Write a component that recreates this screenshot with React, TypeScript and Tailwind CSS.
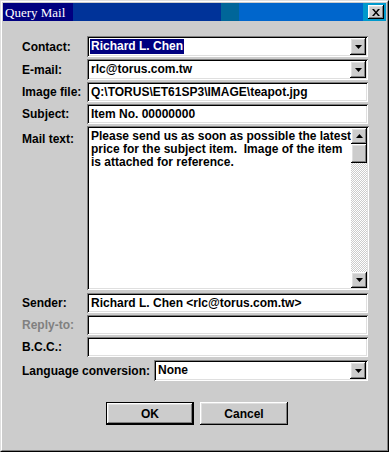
import React from 'react';

const sunken =
  'shadow-[inset_1px_1px_0_#808080,inset_-1px_-1px_0_#ffffff,inset_2px_2px_0_#000000,inset_-2px_-2px_0_#dfdfdf]';
const raised =
  'shadow-[inset_-1px_-1px_0_#000000,inset_1px_1px_0_#ffffff,inset_-2px_-2px_0_#808080,inset_2px_2px_0_#dfdfdf]';

const font = "font-['Liberation_Sans',Arial,sans-serif]";

function Arrow({ up = false }: { up?: boolean }) {
  return (
    <svg width="7" height="4" viewBox="0 0 7 4" className={up ? 'rotate-180' : ''}>
      <polygon points="0,0 7,0 3.5,4" fill="#000" />
    </svg>
  );
}

function DropButton() {
  return (
    <div className={`w-[16px] h-[17px] bg-[#cccccc] flex items-center justify-center ${raised}`}>
      <Arrow />
    </div>
  );
}

function Combo({ value, selected = false }: { value: string; selected?: boolean }) {
  return (
    <div className={`flex-1 h-[21px] bg-white flex items-center pl-[3px] pr-[2px] ${sunken}`}>
      <div className="flex-1 flex items-center">
        <span className={`px-[1px] leading-[15px] ${selected ? 'bg-[#000080] text-white' : 'text-black'}`}>{value}</span>
      </div>
      <DropButton />
    </div>
  );
}

function Field({ value = '' }: { value?: string }) {
  return (
    <div className={`flex-1 h-[20px] bg-white flex items-center pl-[4px] text-black ${sunken}`}>
      <span className="whitespace-pre">{value}</span>
    </div>
  );
}

function Row({ label, children, dim = false }: { label: string; children: React.ReactNode; dim?: boolean }) {
  return (
    <div className="flex items-center">
      <div className={`w-[65px] shrink-0 ${dim ? 'text-[#808080]' : 'text-black'}`}>{label}</div>
      {children}
    </div>
  );
}

export default function App() {
  return (
    <div className={`w-[389px] h-[452px] bg-[#cccccc] ${font} text-[12px] font-bold border border-t-[#dfdfdf] border-l-[#dfdfdf] border-r-black border-b-black`}>
      <div className="h-full border border-t-white border-l-white border-r-[#808080] border-b-[#808080] p-[1px] flex flex-col">
        {/* title bar */}
        <div className="h-[18px] flex items-center justify-between pl-[2px] pr-[2px] bg-[image:linear-gradient(to_right,#000080_0px_70px,#003399_70px_218px,#006699_218px_236px,#0066cc_236px_360px,#0099cc_360px_383px)]">
          <span className="font-['Liberation_Serif','Times_New_Roman',serif] font-normal text-[13px] text-white leading-none">Query Mail</span>
          <div className={`w-[16px] h-[14px] bg-[#cccccc] flex items-center justify-center ${raised}`}>
            <svg width="8" height="7" viewBox="0 0 8 7">
              <path d="M0 0h2l2 2.5L6 0h2L5 3.5 8 7H6L4 4.5 2 7H0l3-3.5z" fill="#000" />
            </svg>
          </div>
        </div>

        {/* body */}
        <div className="flex-1 flex flex-col pl-[19px] pr-[18px] pt-[15px]">
          <div className="flex flex-col gap-[2px]">
            <Row label="Contact:">
              <Combo value="Richard L. Chen" selected />
            </Row>
            <Row label="E-mail:">
              <Combo value="rlc@torus.com.tw" />
            </Row>
            <Row label="Image file:">
              <Field value="Q:\TORUS\ET61SP3\IMAGE\teapot.jpg" />
            </Row>
            <Row label="Subject:">
              <Field value="Item No. 00000000" />
            </Row>
            <div className="flex items-start">
              <div className="w-[65px] shrink-0 pt-[4px]">Mail text:</div>
              <div className={`flex-1 h-[164px] bg-white flex p-[2px] ${sunken}`}>
                <div className="flex-1 pl-[2px] pt-[2px] leading-[13px] text-black whitespace-pre">
                  <div>Please send us as soon as possible the latest</div>
                  <div>price for the subject item.  Image of the item</div>
                  <div>is attached for reference.</div>
                </div>
                <div className="w-[16px] flex flex-col">
                  <div className={`h-[16px] bg-[#cccccc] flex items-center justify-center ${raised}`}>
                    <Arrow up />
                  </div>
                  <div className={`h-[19px] bg-[#cccccc] ${raised}`} />
                  <div className="flex-1 bg-[image:repeating-conic-gradient(#cccccc_0%_25%,#ffffff_0%_50%)] bg-[length:2px_2px]" />
                  <div className={`h-[16px] bg-[#cccccc] flex items-center justify-center ${raised}`}>
                    <Arrow />
                  </div>
                </div>
              </div>
            </div>
          </div>

          <div className="flex flex-col gap-[2px] mt-[3px]">
            <Row label="Sender:">
              <Field value="Richard L. Chen <rlc@torus.com.tw>" />
            </Row>
            <Row label="Reply-to:" dim>
              <Field />
            </Row>
            <Row label="B.C.C.:">
              <Field />
            </Row>
          </div>

          <div className="flex items-center mt-[3px]">
            <div className="w-[132px] shrink-0">Language conversion:</div>
            <Combo value="None" />
          </div>

          <div className="flex justify-center gap-[6px] pl-[4px] mt-[21px]">
            <div className="border border-black">
              <div className={`w-[86px] h-[21px] bg-[#cccccc] flex items-center justify-center ${raised}`}>OK</div>
            </div>
            <div className={`w-[88px] h-[23px] bg-[#cccccc] flex items-center justify-center ${raised}`}>Cancel</div>
          </div>
        </div>
      </div>
    </div>
  );
}
